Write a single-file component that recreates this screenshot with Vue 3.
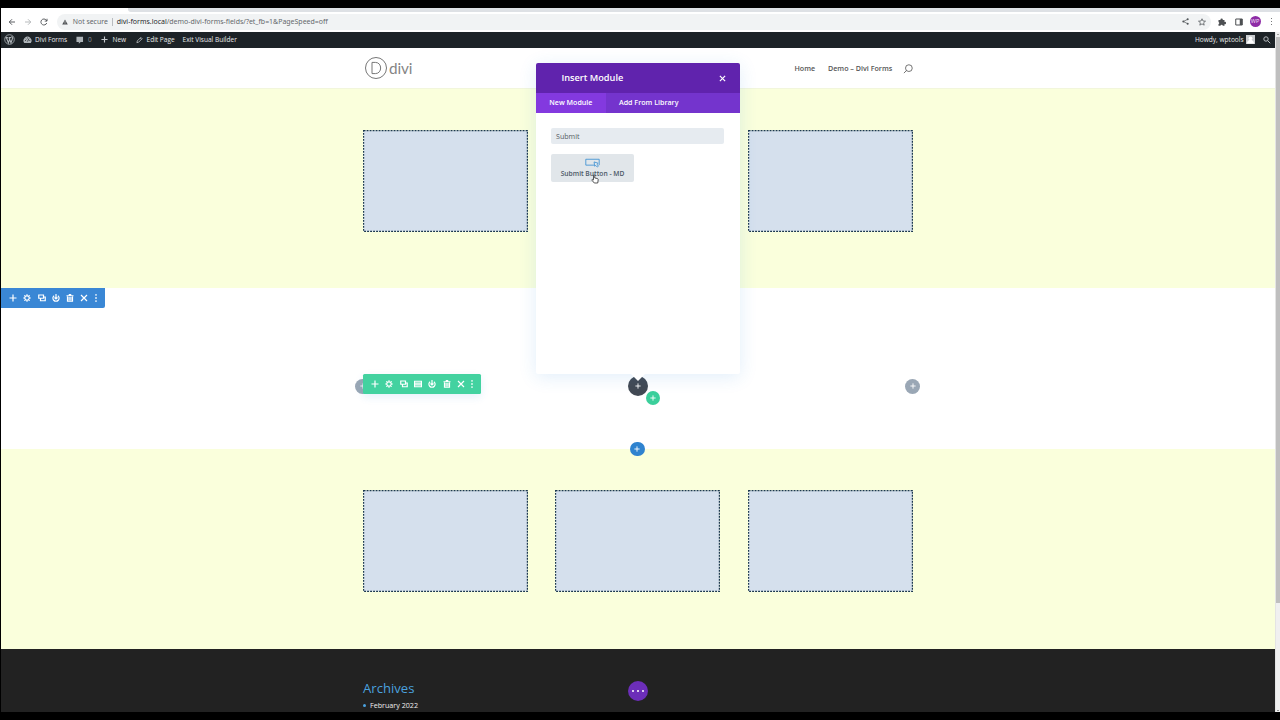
<script setup>
import { h } from 'vue'

const shapes = {
  plus: 'M8 1V15M1 8H15',
  close: 'M2 2L14 14M14 2L2 14',
  copy: 'M1.5 2H11V8.5H1.5ZM5 8.5V13.5H14.5V6H11',
  power: 'M4.2 3.4A6.2 6.2 0 1 0 11.8 3.4M8 0V9.5M5 7L8 10L11 7',
  trash: 'M1 3.5H15M5.5 1.2H10.5M3 5V14.5H13V5M6.2 6V13M9.8 6V13',
  grid: 'M1 2.5H15V13.5H1ZM1 6.2H15M1 9.8H15',
  gear: 'M8 3.6A4.4 4.4 0 1 0 8 12.4A4.4 4.4 0 1 0 8 3.6M8 .5V3.6M8 12.4V15.5M.5 8H3.6M12.4 8H15.5M2.7 2.7L4.9 4.9M11.1 11.1L13.3 13.3M2.7 13.3L4.9 11.1M11.1 4.9L13.3 2.7',
  dots: 'M8 0V3.6M8 6.2V9.8M8 12.4V16'
}
const Icon = (props) =>
  h('svg', { viewBox: '0 0 16 16', fill: 'none', stroke: 'currentColor', 'stroke-width': props.weight || 2.4 }, [
    h('path', { d: shapes[props.name] })
  ])
Icon.props = ['name', 'weight']

const sectionTools = ['plus', 'gear', 'copy', 'power', 'trash', 'close', 'dots']
const rowTools = ['plus', 'gear', 'copy', 'grid', 'power', 'trash', 'close', 'dots']
</script>

<template>
  <div class="screen">
    <div class="browser">
      <div class="tabs"><i></i></div>
      <div class="toolbar">
        <svg class="nav" viewBox="0 0 16 16"><path d="M14 8H2.5M8 2.5L2.5 8L8 13.5" /></svg>
        <svg class="nav off" viewBox="0 0 16 16"><path d="M2 8H13.5M8 2.5L13.5 8L8 13.5" /></svg>
        <svg class="nav" viewBox="0 0 16 16"><path d="M13.5 10A6 6 0 1 1 12.5 4.2L14 6M14 1.5V6.2H9.5" /></svg>
        <div class="address">
          <svg class="warn" viewBox="0 0 14 14"><path d="M7 1L13.5 13H.5Z" fill="#4c4f52" /><path d="M7 5V9M7 10V11.5" stroke="#f1f3f4" stroke-width="1.4" /></svg>
          <span class="insecure">Not secure</span>
          <i class="sep"></i>
          <span class="url"><b>divi-forms.local</b>/demo-divi-forms-fields/?et_fb=1&amp;PageSpeed=off</span>
          <svg class="share" viewBox="0 0 16 16"><path d="M13 3L3 8L13 13" fill="none" stroke="#505458" stroke-width="1.6" /><g fill="#505458"><circle cx="13" cy="3" r="2.3" /><circle cx="3" cy="8" r="2.3" /><circle cx="13" cy="13" r="2.3" /></g></svg>
          <svg class="star" viewBox="0 0 16 16"><path d="M8 1.5L10 6L15 6.4L11.2 9.6L12.4 14.3L8 11.8L3.6 14.3L4.8 9.6L1 6.4L6 6Z" fill="none" stroke="#505458" stroke-width="1.5" /></svg>
        </div>
        <svg class="ext" viewBox="0 0 16 16"><path d="M1 4H5A2.3 2.3 0 1 1 9.5 4H13V8A2.2 2.2 0 1 1 13 12V15.5H9.5A2.2 2.2 0 0 0 5 15.5H1V12A2.2 2.2 0 0 0 1 7.8Z" fill="#4c4f52" /></svg>
        <svg class="panel" viewBox="0 0 16 16"><path d="M1.5 2H14.5V14H1.5Z" fill="none" stroke="#4c4f52" stroke-width="2" /><path d="M9.5 2H14.5V14H9.5Z" fill="#4c4f52" /></svg>
        <span class="profile">WP</span>
        <span class="kebab"><i></i><i></i><i></i></span>
      </div>
    </div>

    <div class="viewport">
      <div class="site">
        <div class="admin">
          <svg class="wp" viewBox="0 0 20 20"><circle cx="10" cy="10" r="8.7" fill="none" stroke="#aeb4b8" stroke-width="1.5" /><path d="M2.8 6.5H7M4.3 6.5L8 16L10.2 9.7M8.5 6.5H13M9 6.5L12.7 16L15.5 8C15.8 6.5 14 5.3 14 4" fill="none" stroke="#aeb4b8" stroke-width="2" /></svg>
          <svg class="gauge" viewBox="0 0 18 16"><path d="M2.5 14A8 8 0 1 1 15.5 14Z" fill="#aeb4b8" /><path d="M9 11L12 5M4 9H6M5.5 5.5L7 6.5M12.5 9H14.5M9 3V5" stroke="#1d2327" stroke-width="1.4" /></svg>
          <span class="a-site">Divi Forms</span>
          <svg class="bubble" viewBox="0 0 16 16"><path d="M1 1H15V12H10L6 16V12H1Z" fill="#aeb4b8" /></svg>
          <span class="a-count">0</span>
          <Icon class="a-plus" name="plus" :weight="2.6" />
          <span class="a-new">New</span>
          <svg class="pencil" viewBox="0 0 16 16"><path d="M2 14L3 10L11 2L14 5L6 13ZM9.5 3.5L12.5 6.5" fill="none" stroke="#c0c4c7" stroke-width="1.8" /></svg>
          <span class="a-edit">Edit Page</span>
          <span class="a-exit">Exit Visual Builder</span>
          <span class="howdy">Howdy, wptools</span>
          <svg class="avatar" viewBox="0 0 18 18"><path d="M0 0H18V18H0Z" fill="#c9cccf" /><circle cx="9" cy="6.5" r="3.7" fill="#fff" /><path d="M2 17C2 12 5 12 6.5 10H11.5C13 12 16 12 16 17Z" fill="#fff" /></svg>
          <svg class="a-search" viewBox="0 0 16 16"><circle cx="6" cy="6" r="4.4" /><path d="M9.3 9.3L14.5 14.5" /></svg>
        </div>

        <header class="header">
          <div class="logo">
            <svg viewBox="0 0 24 24"><circle cx="12" cy="12" r="10.5" /><path d="M8 6.4H11.4C18.4 6.4 18.4 17.6 11.4 17.6H8Z" /></svg>
            <span>divi</span>
          </div>
          <nav class="menu">
            <span class="m-home">Home</span>
            <span class="m-demo">Demo – Divi Forms</span>
            <svg viewBox="0 0 16 16"><circle cx="9.4" cy="6.6" r="5.4" /><path d="M5.7 10.3L1.4 14.6" /></svg>
          </nav>
        </header>

        <section class="band">
          <div class="columns">
            <svg v-for="n in 3" :key="n" class="cell" viewBox="0 0 165 102"><rect x=".6" y=".6" width="163.8" height="100.8" /></svg>
          </div>
        </section>

        <section class="working">
          <div class="tools blue"><Icon v-for="t in sectionTools" :key="t" :name="t" :class="t" /></div>
          <span class="dot grey left"><Icon name="plus" /></span>
          <div class="tools green"><Icon v-for="t in rowTools" :key="t" :name="t" :class="t" /></div>
          <span class="dot dark"><Icon name="plus" /></span>
          <span class="dot teal"><Icon name="plus" /></span>
          <span class="dot grey right"><Icon name="plus" /></span>
          <span class="dot add"><Icon name="plus" /></span>
        </section>

        <section class="band">
          <div class="columns">
            <svg v-for="n in 3" :key="n" class="cell" viewBox="0 0 165 102"><rect x=".6" y=".6" width="163.8" height="100.8" /></svg>
          </div>
        </section>

        <footer class="footer">
          <div class="archives">
            <h4>Archives</h4>
            <p>February 2022</p>
          </div>
          <span class="more"><i></i><i></i><i></i></span>
        </footer>

        <div class="modal">
          <div class="m-head"><span>Insert Module</span><Icon name="close" :weight="2.8" /></div>
          <div class="m-tabs"><span class="active">New Module</span><span class="library">Add From Library</span></div>
          <div class="m-body">
            <div class="field">Submit</div>
            <div class="module">
              <svg viewBox="0 0 28 18"><path d="M17 13H1.5V2H26.5V13" /><path d="M17 7L24.5 9.5L22.5 11.5L25 15L23 16.5L20 13.5L18 15Z" fill="#e3e8ec" /></svg>
              <span>Submit Button - MD</span>
            </div>
            <svg class="hand" viewBox="0 0 16 20"><path d="M5 11V3C5 1.2 7.5 1.2 7.5 3V8L12.5 9C14 9.4 14.5 10 14.3 12L13.5 18H6.5L2 12.5C1.4 11 3 10.3 4 11.2L5 12Z" fill="#fff" stroke="#222" stroke-width="1.5" /></svg>
          </div>
        </div>
      </div>
      <div class="scrollbar"><i class="up"></i><div class="thumb"></div><i class="down"></i></div>
    </div>
  </div>
</template>

<style>
body { background: #000; overflow: hidden; }
</style>

<style scoped>
.screen { width: 1280px; height: 720px; box-sizing: border-box; padding: 8px 0 8px 1px; background: #000; font-family: "Open Sans", "Noto Sans", sans-serif; display: flex; flex-direction: column; overflow: hidden; }
.screen * { box-sizing: border-box; }
svg { display: block; flex: none; }
span { white-space: nowrap; }

.browser { height: 24px; background: #fff; flex: none; }
.tabs { height: 4px; background: #fff; display: flex; }
.tabs i { flex: 1; margin-left: 127px; background: #dee1e5; border-bottom-left-radius: 3px; }
.toolbar { height: 20px; padding: 1px 3.5px 2px 7px; display: flex; align-items: center; }
.nav { width: 8px; height: 8px; margin-right: 8.2px; fill: none; stroke: #4c4f52; stroke-width: 1.8; }
.nav.off { stroke: #b0b3b6; }
.address { width: 1154.5px; height: 16px; border-radius: 8px; background: #f1f3f4; display: flex; align-items: center; padding-left: 5.2px; color: #63676b; font-family: "Noto Sans", sans-serif; font-size: 7px; }
.warn { width: 6px; height: 6px; margin-right: 5px; }
.insecure { width: 39px; font-size: 6.9px; }
.sep { width: 1px; height: 8px; background: #b9bcc0; margin-right: 4px; }
.url { flex: 1; font-size: 6.98px; }
.url b { color: #24272a; font-weight: 400; }
.share { width: 7px; height: 7px; margin-right: 9px; }
.star { width: 8px; height: 8px; margin-right: 5px; }
.ext { width: 8px; height: 8px; margin-left: 7px; }
.panel { width: 8px; height: 8px; margin-left: 8.5px; }
.profile { width: 11px; height: 11px; margin-left: 7px; border-radius: 50%; background: #8e2ca6; color: #f4e0f7; font-size: 5.5px; line-height: 11px; text-align: center; }
.kebab { width: 2px; margin-left: 10px; display: grid; gap: 1.3px; }
.kebab i { width: 1.5px; height: 1.5px; background: #4c4f52; border-radius: 50%; }

.viewport { flex: 1; display: flex; min-height: 0; }
.site { position: relative; width: 1274px; height: 680px; background: #fff; overflow: hidden; }
.scrollbar { width: 5px; background: #f0f0f0; display: flex; flex-direction: column; border-left: 1px solid #e4e4e4; }
.scrollbar i { border: 1.5px solid transparent; width: 0; height: 0; margin-left: 1px; }
.up { margin-top: 1px; border-bottom-color: #555 !important; }
.thumb { height: 566px; margin-top: 2px; background: #bfbfbf; }
.down { margin-top: auto; border-top-color: #333 !important; }

.admin { height: 16px; background: #1d2327; display: flex; align-items: center; padding: 0 0 1px 3px; color: #e9eaeb; font-size: 6.55px; }
.wp { width: 11px; height: 11px; margin-right: 8px; }
.gauge { width: 9px; height: 8px; margin-right: 3px; }
.a-site { width: 41px; }
.bubble { width: 7.5px; height: 8px; margin-right: 4.5px; }
.a-count { width: 13px; color: #8d9498; }
.a-plus { width: 7px; height: 7px; color: #c4c8cb; margin-right: 4.5px; }
.a-new { width: 23px; }
.pencil { width: 7px; height: 8px; margin-right: 4px; }
.a-edit { width: 36px; }
.a-exit { flex: 1; }
.howdy { width: 51px; font-size: 6.55px; }
.avatar { width: 9px; height: 9px; margin-right: 8px; }
.a-search { width: 8px; height: 8px; margin-right: 4px; fill: none; stroke: #b7bcbf; stroke-width: 2; }

.header { height: 40px; padding: 0 362px 0 363px; display: flex; justify-content: space-between; align-items: center; background: #fff; }
.logo { display: flex; align-items: center; height: 40px; color: #777; }
.logo svg { width: 24px; height: 24px; fill: none; stroke: #777; stroke-width: 1; }
.logo span { font-family: Lato, sans-serif; font-weight: 400; font-size: 15.3px; margin-left: 1px; letter-spacing: -.1px; line-height: 20px; color: #858585; }
.menu { display: flex; align-items: center; color: #555; font-weight: 600; font-size: 7.15px; }
.m-home { width: 33.5px; }
.m-demo { width: 75px; }
.menu svg { width: 10px; height: 10px; margin-top: 1px; fill: none; stroke: #555; stroke-width: 1.3; }

.band { height: 200px; padding: 42px 362px 0; background: #faffdc; box-shadow: inset 0 1px #f2f6dc; }
.columns { display: grid; grid-template-columns: repeat(3, 165px); column-gap: 27.4px; }
.cell { width: 165px; height: 102px; fill: #d5e0ed; stroke: #1c3850; stroke-width: 1.2; stroke-dasharray: 1.9 1.1; }
.band + .working { position: relative; }
.working { height: 161px; background: #fff; }
.working + .band { height: 200px; padding-top: 41.4px; box-shadow: none; }

.tools { position: absolute; display: flex; align-items: center; color: #fff; height: 20px; }
.tools svg { width: 8px; height: 8px; margin-right: 6.3px; }
.tools .close { margin-right: 3.2px; }
.tools .dots { margin-right: 0; }
.blue { left: 0; top: 0; width: 103.5px; padding-left: 8px; background: #3a87d5; border-radius: 0 0 2px 0; }
.green { left: 362px; top: 86px; width: 118px; padding-left: 8.1px; background: #43d2a0; border-radius: 1.5px; box-shadow: 0 3px 8px rgba(43, 135, 218, .12); }
.dot { position: absolute; display: grid; place-items: center; width: 15px; height: 15px; border-radius: 50%; color: #fff; }
.dot svg { width: 6px; height: 6px; }
.grey { top: 90.5px; background: #9aa7b5; }
.left { left: 354px; }
.right { left: 904px; }
.dark { left: 627px; top: 88px; width: 20px; height: 20px; background: #424953; }
.teal { left: 644.5px; top: 102.5px; width: 14.5px; height: 14.5px; background: #3bcf9b; }
.add { left: 629px; top: 153.5px; width: 14.5px; height: 14.5px; background: #2f83cf; z-index: 1; }

.footer { position: relative; height: 63px; padding: 31px 362px 0; background: #222; overflow: hidden; }
.archives h4 { margin: 0; color: #4aa1df; font-size: 13.1px; font-weight: 400; line-height: 17px; }
.archives p { margin: 3px 0 0; color: #eee; font-size: 7.15px; line-height: 10px; display: flex; align-items: center; }
.archives p::before { content: ""; width: 3px; height: 3px; margin: 1px 4px 0 0; border-radius: 50%; background: #4aa1df; }
.more { position: absolute; left: 626.5px; top: 31.5px; width: 20.5px; height: 20.5px; border-radius: 50%; background: #6c2eb9; display: flex; gap: 3px; align-items: center; justify-content: center; }
.more i { width: 2px; height: 2px; border-radius: 50%; background: #fff; }

.modal { position: absolute; left: 535px; top: 31px; width: 204px; height: 311px; background: #fff; border-radius: 2px; box-shadow: 0 3px 18px rgba(43, 135, 218, .14); color: #fff; }
.modal::after { content: ""; position: absolute; left: 95px; top: 311px; border: 7px solid transparent; border-top-color: #fff; border-bottom: 0; }
.m-head { height: 30px; padding: 0 14px 0 25.4px; display: flex; align-items: center; justify-content: space-between; background: #6023ad; border-radius: 2px 2px 0 0; font-size: 9.2px; font-weight: 600; }
.m-head span { margin-top: -1px; }
.m-head svg { width: 7px; height: 7px; }
.m-tabs { height: 20px; display: flex; background: #7434cd; font-size: 7.1px; font-weight: 600; line-height: 19px; }
.active { width: 70px; padding-left: 13.3px; background: #8339df; }
.library { padding-left: 13px; }
.m-body { position: relative; padding: 15px 16px 15px 15px; }
.field { height: 15.5px; padding-left: 5px; border-radius: 2px; background: #e6ebf0; color: #555b62; font-size: 7.1px; line-height: 16px; }
.module { width: 83px; height: 28px; margin-top: 10.5px; padding-top: 4px; border-radius: 2px; background: #e1e6ea; color: #4c5866; display: flex; flex-direction: column; align-items: center; font-size: 6.7px; font-weight: 600; }
.module svg { width: 15px; height: 10px; fill: none; stroke: #3e91d3; stroke-width: 1.6; }
.module span { line-height: 10px; margin-top: 1px; }
.hand { position: absolute; left: 54.5px; top: 60.5px; width: 8px; height: 10px; }
</style>
